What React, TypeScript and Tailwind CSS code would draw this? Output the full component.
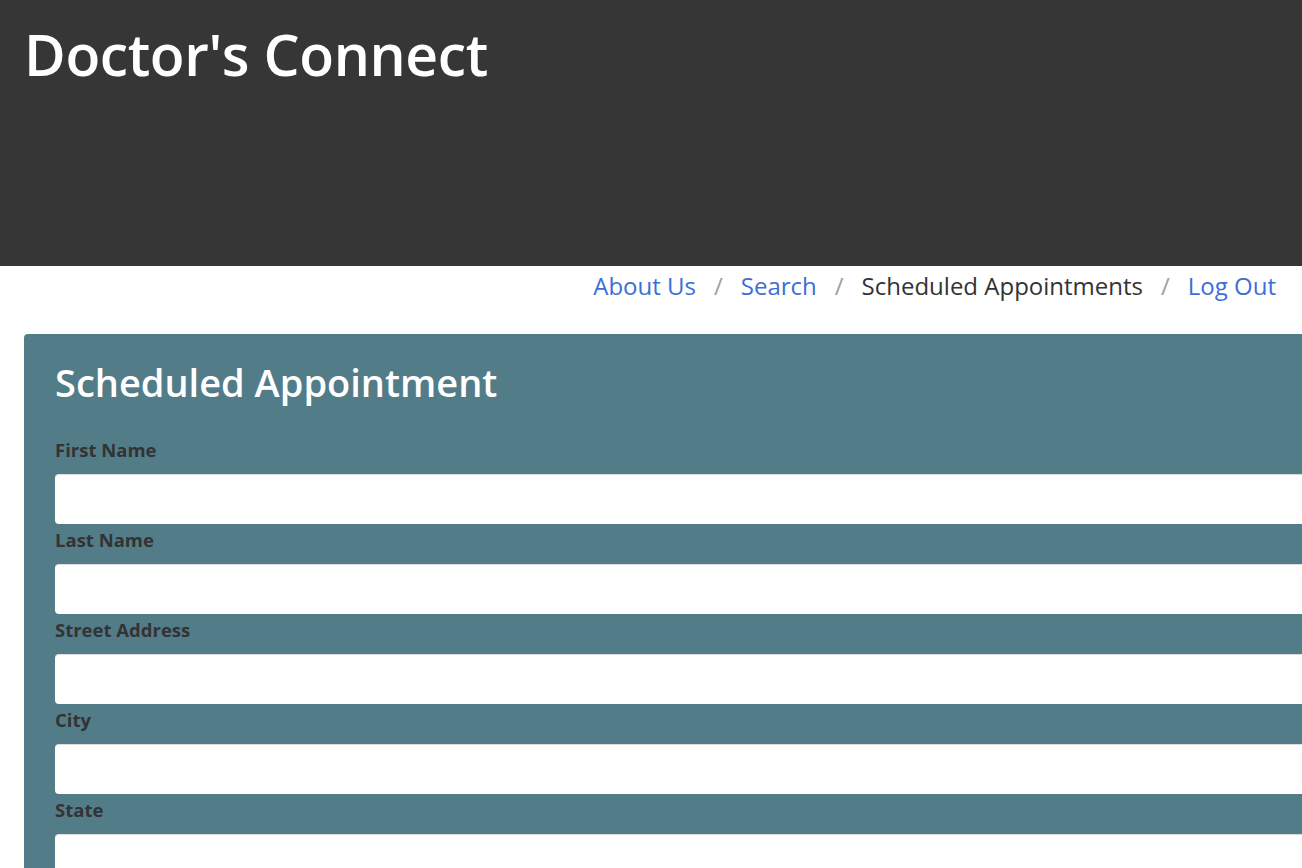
import React from "react";

const font = { fontFamily: '"Open Sans", "Noto Sans", sans-serif' };

export default function App() {
  const fields = ["First Name", "Last Name", "Street Address", "City", "State"];
  return (
    <div className="w-full h-[868px] overflow-hidden bg-white" style={font}>
      <header className="h-[266px] bg-[#363636] px-6 pt-[14px]">
        <h1 className="text-[57px] leading-[80px] font-semibold text-white tracking-[-0.4px]">Doctor's Connect</h1>
      </header>
      <nav className="flex justify-end pr-[26px] pt-[1px] text-[24px] leading-[38px]">
        <a className="text-[#3b6fd6]">About Us</a>
        <span className="px-[18px] text-[#a0a0a0]">/</span>
        <a className="text-[#3b6fd6]">Search</a>
        <span className="px-[18px] text-[#a0a0a0]">/</span>
        <span className="text-[#333]">Scheduled Appointments</span>
        <span className="px-[18px] text-[#a0a0a0]">/</span>
        <a className="text-[#3b6fd6]">Log Out</a>
      </nav>
      <div className="pl-6 pt-[29px]">
        <div className="w-[1400px] bg-[#537c89] rounded-[4px] pl-[31px] pt-[20px] pb-10">
          <h2 className="text-[38px] leading-[56px] font-semibold text-white mb-[24px]">Scheduled Appointment</h2>
          {fields.map((f) => (
            <div key={f}>
              <label className="block pt-[2px] text-[18.5px] leading-[28px] font-bold text-[#333] mb-[10px]">{f}</label>
              <input className="block w-full h-[50px] bg-white rounded-[4px] border-t border-[#ddd]" />
            </div>
          ))}
        </div>
      </div>
    </div>
  );
}
